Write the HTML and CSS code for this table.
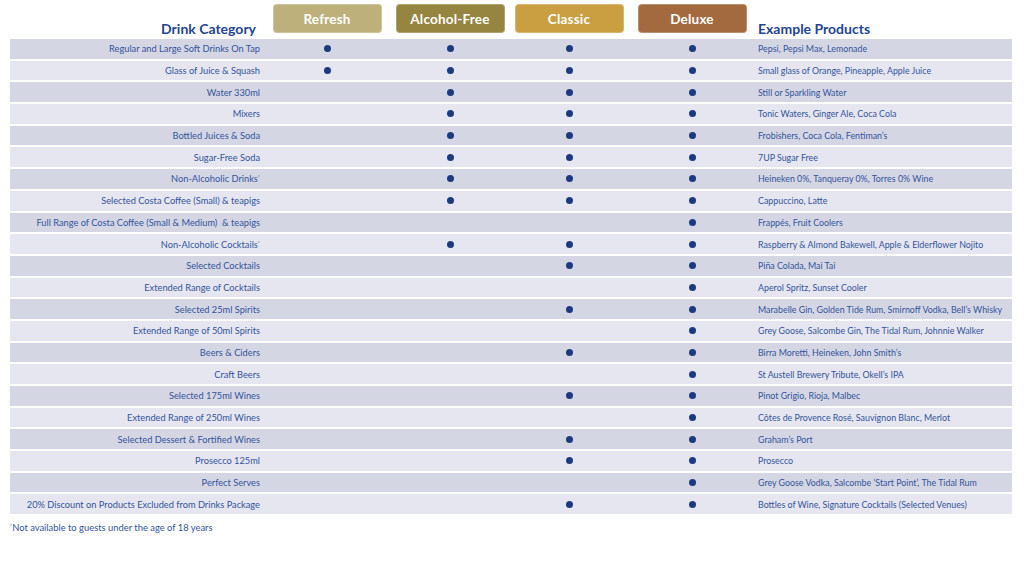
FILE: index.html
```html
<!DOCTYPE html>
<html lang="en">
<head>
<meta charset="utf-8">
<title>Drinks Packages</title>
<link rel="stylesheet" href="styles.css">
</head>
<body>
<div class="page">
  <div class="head">
    <div class="head-cat">Drink Category</div>
    <div class="pill"><span class="btn refresh">Refresh</span></div>
    <div class="pill"><span class="btn alcfree">Alcohol-Free</span></div>
    <div class="pill"><span class="btn classic">Classic</span></div>
    <div class="pill"><span class="btn deluxe">Deluxe</span></div>
    <div class="head-ex">Example Products</div>
  </div>
  <div class="table">
    <div class="row"><div class="cat">Regular and Large Soft Drinks On Tap</div><div class="c"><i class="dot"></i></div><div class="c"><i class="dot"></i></div><div class="c"><i class="dot"></i></div><div class="c"><i class="dot"></i></div><div class="ex">Pepsi, Pepsi Max, Lemonade</div></div>
    <div class="row"><div class="cat">Glass of Juice &amp; Squash</div><div class="c"><i class="dot"></i></div><div class="c"><i class="dot"></i></div><div class="c"><i class="dot"></i></div><div class="c"><i class="dot"></i></div><div class="ex">Small glass of Orange, Pineapple, Apple Juice</div></div>
    <div class="row"><div class="cat">Water 330ml</div><div class="c"></div><div class="c"><i class="dot"></i></div><div class="c"><i class="dot"></i></div><div class="c"><i class="dot"></i></div><div class="ex">Still or Sparkling Water</div></div>
    <div class="row"><div class="cat">Mixers</div><div class="c"></div><div class="c"><i class="dot"></i></div><div class="c"><i class="dot"></i></div><div class="c"><i class="dot"></i></div><div class="ex">Tonic Waters, Ginger Ale, Coca Cola</div></div>
    <div class="row"><div class="cat">Bottled Juices &amp; Soda</div><div class="c"></div><div class="c"><i class="dot"></i></div><div class="c"><i class="dot"></i></div><div class="c"><i class="dot"></i></div><div class="ex">Frobishers, Coca Cola, Fentiman’s</div></div>
    <div class="row"><div class="cat">Sugar-Free Soda</div><div class="c"></div><div class="c"><i class="dot"></i></div><div class="c"><i class="dot"></i></div><div class="c"><i class="dot"></i></div><div class="ex">7UP Sugar Free</div></div>
    <div class="row"><div class="cat">Non-Alcoholic Drinks<sup>*</sup></div><div class="c"></div><div class="c"><i class="dot"></i></div><div class="c"><i class="dot"></i></div><div class="c"><i class="dot"></i></div><div class="ex">Heineken 0%, Tanqueray 0%, Torres 0% Wine</div></div>
    <div class="row"><div class="cat">Selected Costa Coffee (Small) &amp; teapigs</div><div class="c"></div><div class="c"><i class="dot"></i></div><div class="c"><i class="dot"></i></div><div class="c"><i class="dot"></i></div><div class="ex">Cappuccino, Latte</div></div>
    <div class="row"><div class="cat">Full Range of Costa Coffee (Small &amp; Medium)&nbsp; &amp; teapigs</div><div class="c"></div><div class="c"></div><div class="c"></div><div class="c"><i class="dot"></i></div><div class="ex">Frappés, Fruit Coolers</div></div>
    <div class="row"><div class="cat">Non-Alcoholic Cocktails<sup>*</sup></div><div class="c"></div><div class="c"><i class="dot"></i></div><div class="c"><i class="dot"></i></div><div class="c"><i class="dot"></i></div><div class="ex">Raspberry &amp; Almond Bakewell, Apple &amp; Elderflower Nojito</div></div>
    <div class="row"><div class="cat">Selected Cocktails</div><div class="c"></div><div class="c"></div><div class="c"><i class="dot"></i></div><div class="c"><i class="dot"></i></div><div class="ex">Piña Colada, Mai Tai</div></div>
    <div class="row"><div class="cat">Extended Range of Cocktails</div><div class="c"></div><div class="c"></div><div class="c"></div><div class="c"><i class="dot"></i></div><div class="ex">Aperol Spritz, Sunset Cooler</div></div>
    <div class="row"><div class="cat">Selected 25ml Spirits</div><div class="c"></div><div class="c"></div><div class="c"><i class="dot"></i></div><div class="c"><i class="dot"></i></div><div class="ex">Marabelle Gin, Golden Tide Rum, Smirnoff Vodka, Bell’s Whisky</div></div>
    <div class="row"><div class="cat">Extended Range of 50ml Spirits</div><div class="c"></div><div class="c"></div><div class="c"></div><div class="c"><i class="dot"></i></div><div class="ex">Grey Goose, Salcombe Gin, The Tidal Rum, Johnnie Walker</div></div>
    <div class="row"><div class="cat">Beers &amp; Ciders</div><div class="c"></div><div class="c"></div><div class="c"><i class="dot"></i></div><div class="c"><i class="dot"></i></div><div class="ex">Birra Moretti, Heineken, John Smith’s</div></div>
    <div class="row"><div class="cat">Craft Beers</div><div class="c"></div><div class="c"></div><div class="c"></div><div class="c"><i class="dot"></i></div><div class="ex">St Austell Brewery Tribute, Okell’s IPA</div></div>
    <div class="row"><div class="cat">Selected 175ml Wines</div><div class="c"></div><div class="c"></div><div class="c"><i class="dot"></i></div><div class="c"><i class="dot"></i></div><div class="ex">Pinot Grigio, Rioja, Malbec</div></div>
    <div class="row"><div class="cat">Extended Range of 250ml Wines</div><div class="c"></div><div class="c"></div><div class="c"></div><div class="c"><i class="dot"></i></div><div class="ex">Côtes de Provence Rosé, Sauvignon Blanc, Merlot</div></div>
    <div class="row"><div class="cat">Selected Dessert &amp; Fortified Wines</div><div class="c"></div><div class="c"></div><div class="c"><i class="dot"></i></div><div class="c"><i class="dot"></i></div><div class="ex">Graham’s Port</div></div>
    <div class="row"><div class="cat">Prosecco 125ml</div><div class="c"></div><div class="c"></div><div class="c"><i class="dot"></i></div><div class="c"><i class="dot"></i></div><div class="ex">Prosecco</div></div>
    <div class="row"><div class="cat">Perfect Serves</div><div class="c"></div><div class="c"></div><div class="c"></div><div class="c"><i class="dot"></i></div><div class="ex">Grey Goose Vodka, Salcombe ‘Start Point’, The Tidal Rum</div></div>
    <div class="row"><div class="cat">20% Discount on Products Excluded from Drinks Package</div><div class="c"></div><div class="c"></div><div class="c"><i class="dot"></i></div><div class="c"><i class="dot"></i></div><div class="ex">Bottles of Wine, Signature Cocktails (Selected Venues)</div></div>
  </div>
  <p class="note"><sup>*</sup>Not available to guests under the age of 18 years</p>
</div>
</body>
</html>
```

FILE: styles.css
```css
* { box-sizing: border-box; }
html, body { margin: 0; padding: 0; background: #ffffff; }
body {
  font-family: Lato, "Open Sans", "Liberation Sans", sans-serif;
  color: #34549a;
  width: 1024px;
  height: 576px;
  overflow: hidden;
}
.page { padding: 4px 12px 0 10px; }

.head, .row {
  display: grid;
  grid-template-columns: 256px 122px 124px 114px 132px 1fr;
  align-items: center;
}
.head { height: 35px; align-items: end; padding-bottom: 2px; }
.head-cat, .head-ex {
  font-weight: 700;
  font-size: 14px;
  color: #1f4591;
  line-height: 14px;
  padding-bottom: 1px;
}
.head-cat { text-align: right; padding-right: 10px; }
.pill { display: flex; justify-content: center; align-self: start; }
.btn {
  display: flex;
  align-items: center;
  justify-content: center;
  width: 109px;
  height: 29px;
  border-radius: 4px;
  color: #ffffff;
  font-weight: 700;
  font-size: 13.5px;
  letter-spacing: 0.2px;
  border: 1px solid rgba(255,255,255,0.25);
}
.refresh { background: #bdb07b; }
.alcfree { background: #968540; }
.classic { background: #c99f42; }
.deluxe { background: #a36a40; }

.table { display: flex; flex-direction: column; gap: 2px; }
.row { height: 19.7px; background: #d4d6e4; font-size: 9px; }
.row:nth-child(even) { background: #e5e6f0; }
.cat { text-align: right; padding-right: 6px; white-space: nowrap; font-size: 9.25px; }
.c { display: flex; justify-content: center; }
.ex { white-space: nowrap; font-size: 8.85px; }
.dot {
  display: block;
  width: 7px;
  height: 7px;
  border-radius: 50%;
  background: #1d3a80;
}
sup { font-size: 5px; vertical-align: 3px; line-height: 0; }
.note { margin: 8px 0 0; font-size: 9.4px; }
.note sup { font-size: 5px; }
```
